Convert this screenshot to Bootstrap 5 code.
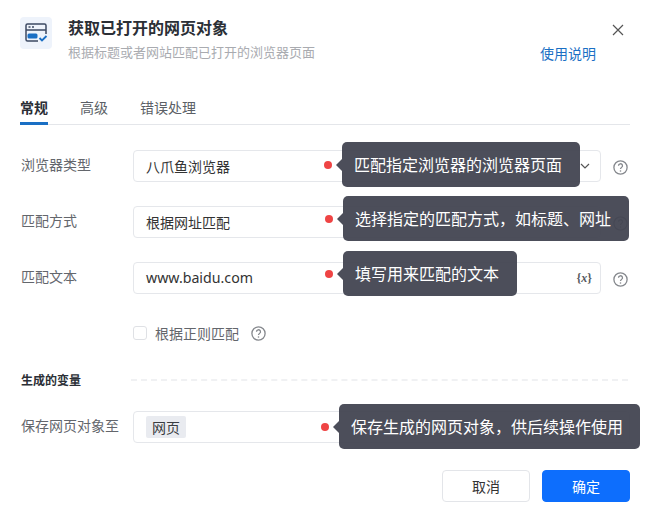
<!DOCTYPE html>
<html lang="zh">
<head>
<meta charset="utf-8">
<title>获取已打开的网页对象</title>
<link href="https://cdn.jsdelivr.net/npm/bootstrap@5.3.0/dist/css/bootstrap.min.css" rel="stylesheet">
<style>
html,body{margin:0;background:#fff;}
body{font-family:"Noto Sans CJK SC","Noto Sans",sans-serif;color:#333;font-size:14px;}
.dlg{width:652px;height:522px;padding:17px 22px 0 20px;overflow:hidden;}
.app-ico{width:32px;height:32px;background:#eef3fb;border-radius:4px;flex:none;margin-right:16px;}
.ttl{font-size:16px;line-height:22px;font-weight:700;color:#2b2f36;margin-top:-1px;}
.subt{font-size:13px;line-height:20px;color:#a9abb0;margin-top:4px;}
.doc-link{position:absolute;left:520px;top:26px;font-size:14px;line-height:20px;color:#1a6fc4;text-decoration:none;white-space:nowrap;}
.close-x{position:absolute;left:591px;top:6px;width:14px;height:14px;padding:0;border:0;background:none;line-height:0;}
.tabs-bar{margin-top:35px;margin-bottom:25px;height:28px;border-bottom:1px solid #e4e6ea;gap:32px;}
.tab-i{font-size:14px;line-height:20px;height:28px;color:#5b5f66;}
.tab-i.on{font-weight:700;color:#2b2f36;border-bottom:3px solid #1a6fc4;}
.frow{height:32px;margin-bottom:24px;}
.flbl{width:113px;flex:none;font-size:14px;color:#63666c;line-height:20px;margin-top:-4px;padding-left:1px;}
.fbox{width:468px;height:32px;flex:none;position:relative;}
.fbox.wide{width:497px;}
.finp{height:32px;padding:0 12px;border:1px solid #e5e7eb;border-radius:4px;font-size:14px;line-height:30px;color:#333;display:flex;align-items:center;justify-content:space-between;background:#fff;}
.url-t{font-size:14.200px;font-family:"Noto Sans","Open Sans",sans-serif;}
.help{flex:none;margin-left:12px;margin-top:3px;width:15px;height:15px;display:block;}
.dotm{position:absolute;width:8px;height:8px;border-radius:50%;background:#ef4444;z-index:6;}
.tipb{position:absolute;height:45px;padding:0 12px;background:rgba(66,68,81,.95);border-radius:5px;color:#fff;font-size:16px;line-height:44px;white-space:nowrap;z-index:5;}
.tipb::before{content:"";position:absolute;left:-6px;top:50%;margin-top:-6px;border-style:solid;border-width:6px 6px 6px 0;border-color:transparent rgba(66,68,81,.95) transparent transparent;}
.d1{left:191px;top:11px}.t1{left:209px;top:-8px;width:238px}
.d2{left:192px;top:9px}.t2{left:210px;top:-10px;width:286px}
.d3{left:192px;top:8px}.t3{left:210px;top:-11px;width:174px}
.d4{left:188px;top:12px}.t4{left:206px;top:-7px;width:301px}
.chk-row{margin:31px 0 0 113px;height:16px;font-size:14px;color:#63666c;}
.chk-row .help{margin-top:0;}
.fake-chk{width:14px;height:14px;border:1px solid #dfe1e5;border-radius:3px;margin:0 8px 0 0;background:#fff;flex:none;}
.sec-row{margin-top:29px;height:20px;margin-bottom:21px;}
.sec-t{font-size:12px;font-weight:700;color:#2b2f36;line-height:20px;width:111px;flex:none;padding-left:1px;}
.sec-l{flex:1;border-top:2px dashed #f0f1f3;height:0;margin-right:2px;}
.var-tag{background:#e9ebf0;border-radius:2px;font-size:14px;line-height:22px;padding:0 6px;color:#3a3d42;}
.xvar{font-size:12px;font-weight:700;color:#55585e;font-family:"Liberation Serif",serif;margin-right:-4px;}
.caret-i{margin-right:-2px;}
.foot{margin-top:27px;gap:12px;justify-content:flex-end;}
.bcancel,.bok{width:88px;height:32px;padding:0;font-size:14px;border-radius:4px;line-height:30px;}
.bcancel{background:#fff;border:1px solid #e3e5e9;color:#333;}
.bok{background:#0d6efd;border:1px solid #0d6efd;color:#fff;}
</style>
</head>
<body>
<div class="dlg">
  <div class="d-flex position-relative">
    <div class="app-ico d-flex align-items-center justify-content-center">
      <svg width="24" height="22" viewBox="0 0 24 22" fill="none"><path d="M14 19H3.500A1.500 1.500 0 0 1 2 17.500v-14A1.500 1.500 0 0 1 3.500 2h17A1.500 1.500 0 0 1 22 3.500V12M2 8h20" stroke="#3d4a63" stroke-width="1.500"/><path d="M4.500 5h2M8 5h2" stroke="#3d4a63" stroke-width="1.400"/><rect x="3.500" y="11.500" width="10" height="5" rx="1.500" fill="#1a6fc4"/><path d="M15.500 16l2.500 2.500 4.500-4.500" stroke="#1a6fc4" stroke-width="1.800"/></svg>
    </div>
    <div>
      <div class="ttl">获取已打开的网页对象</div>
      <div class="subt">根据标题或者网站匹配已打开的浏览器页面</div>
    </div>
    <a class="doc-link" href="#">使用说明</a>
    <button class="close-x" type="button" aria-label="关闭"><svg width="14" height="14" viewBox="0 0 14 14"><path d="M2 2l10 10M12 2L2 12" stroke="#555" stroke-width="1.200" fill="none"/></svg></button>
  </div>

  <div class="tabs-bar d-flex">
    <div class="tab-i on">常规</div>
    <div class="tab-i">高级</div>
    <div class="tab-i">错误处理</div>
  </div>

  <div class="d-flex align-items-center frow">
    <div class="flbl">浏览器类型</div>
    <div class="fbox">
      <div class="finp"><span>八爪鱼浏览器</span>
        <svg class="caret-i" width="10" height="6" viewBox="0 0 10 6"><path d="M1 1l4 4 4-4" stroke="#555" stroke-width="1.200" fill="none"/></svg></div>
      <span class="dotm d1"></span>
      <div class="tipb t1">匹配指定浏览器的浏览器页面</div>
    </div>
    <svg class="help" viewBox="0 0 15 15"><circle cx="7.500" cy="7.500" r="6.600" stroke="#85888d" fill="none" stroke-width="1.300"/><path d="M5.500 5.800a2 2 0 1 1 3 1.700c-.7.400-1 .8-1 1.500" stroke="#85888d" fill="none" stroke-width="1.300"/><circle cx="7.500" cy="11" r=".8" fill="#85888d"/></svg>
  </div>

  <div class="d-flex align-items-center frow">
    <div class="flbl">匹配方式</div>
    <div class="fbox">
      <div class="finp"><span>根据网址匹配</span></div>
      <span class="dotm d2"></span>
      <div class="tipb t2">选择指定的匹配方式，如标题、网址</div>
    </div>
    <svg class="help" viewBox="0 0 15 15"><circle cx="7.500" cy="7.500" r="6.600" stroke="#85888d" fill="none" stroke-width="1.300"/><path d="M5.500 5.800a2 2 0 1 1 3 1.700c-.7.400-1 .8-1 1.500" stroke="#85888d" fill="none" stroke-width="1.300"/><circle cx="7.500" cy="11" r=".8" fill="#85888d"/></svg>
  </div>

  <div class="d-flex align-items-center frow">
    <div class="flbl">匹配文本</div>
    <div class="fbox">
      <div class="finp"><span class="url-t">www.baidu.com</span>
        <span class="xvar">{<i>x</i>}</span></div>
      <span class="dotm d3"></span>
      <div class="tipb t3">填写用来匹配的文本</div>
    </div>
    <svg class="help" viewBox="0 0 15 15"><circle cx="7.500" cy="7.500" r="6.600" stroke="#85888d" fill="none" stroke-width="1.300"/><path d="M5.500 5.800a2 2 0 1 1 3 1.700c-.7.400-1 .8-1 1.500" stroke="#85888d" fill="none" stroke-width="1.300"/><circle cx="7.500" cy="11" r=".8" fill="#85888d"/></svg>
  </div>

  <div class="chk-row d-flex align-items-center">
    <span class="fake-chk"></span><span>根据正则匹配</span>
    <svg class="help" viewBox="0 0 15 15"><circle cx="7.500" cy="7.500" r="6.600" stroke="#85888d" fill="none" stroke-width="1.300"/><path d="M5.500 5.800a2 2 0 1 1 3 1.700c-.7.400-1 .8-1 1.500" stroke="#85888d" fill="none" stroke-width="1.300"/><circle cx="7.500" cy="11" r=".8" fill="#85888d"/></svg>
  </div>

  <div class="sec-row d-flex align-items-center">
    <div class="sec-t">生成的变量</div>
    <div class="sec-l"></div>
  </div>

  <div class="d-flex align-items-center frow">
    <div class="flbl">保存网页对象至</div>
    <div class="fbox wide">
      <div class="finp"><span class="var-tag">网页</span></div>
      <span class="dotm d4"></span>
      <div class="tipb t4">保存生成的网页对象，供后续操作使用</div>
    </div>
  </div>

  <div class="foot d-flex">
    <button class="bcancel" type="button">取消</button>
    <button class="bok" type="button">确定</button>
  </div>
</div>
<script src="https://cdn.jsdelivr.net/npm/bootstrap@5.3.0/dist/js/bootstrap.bundle.min.js"></script>
</body>
</html>
